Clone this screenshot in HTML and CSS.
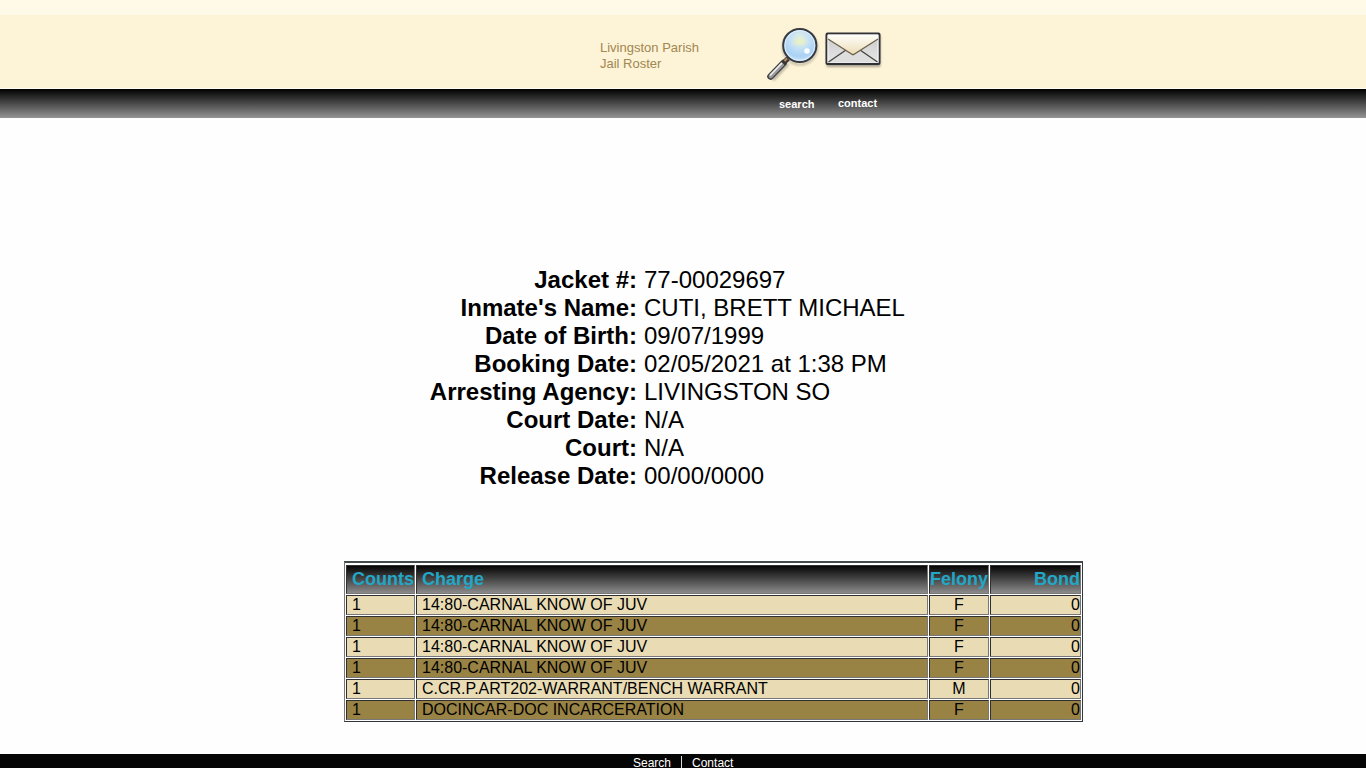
FILE: index.html
```html
<!DOCTYPE html>
<html lang="en">
<head>
<meta charset="utf-8">
<title>Livingston Parish Jail Roster</title>
<link rel="stylesheet" href="styles.css">
</head>
<body>
<header class="banner">
  <div class="title">Livingston Parish<br>Jail Roster</div>
  <svg class="lens" width="56" height="58" viewBox="0 0 56 58">
    <defs>
      <radialGradient id="glass" cx=".5" cy=".3" r=".7"><stop offset="0" stop-color="#e5f1dc"/><stop offset=".35" stop-color="#c9e3f5"/><stop offset=".75" stop-color="#a9d1f5"/><stop offset="1" stop-color="#d5eafa"/></radialGradient>
      <radialGradient id="glow"><stop offset="0" stop-color="#f0f4b4"/><stop offset="1" stop-color="#dcebd8" stop-opacity="0"/></radialGradient>
      <filter id="soft"><feGaussianBlur stdDeviation="1"/></filter>
    </defs>
    <g filter="url(#soft)" opacity=".4" fill="none" stroke="#655f58"><circle cx="35" cy="21.500" r="17" stroke-width="2"/><path d="M7 53L22 37" stroke-width="6"/></g>
    <path d="M5.500 50.500L18.500 37" stroke="#3b3b40" stroke-width="6.500" stroke-linecap="round"/>
    <path d="M5.700 50.200L18 37.500" stroke="#9a9a9b" stroke-width="4.200" stroke-linecap="round"/>
    <path d="M5.500 49L16.500 37.500" stroke="#efefef" stroke-width="1.700" stroke-linecap="round"/>
    <path d="M18 37.500L23 32.500" stroke="#3a3535" stroke-width="5"/>
    <path d="M19.500 35L22 32.500" stroke="#b98c62" stroke-width="2.200"/>
    <circle cx="34.800" cy="19.500" r="16.600" fill="url(#glass)" stroke="#363a43" stroke-width="2"/>
    <circle cx="34.800" cy="19.500" r="15" fill="none" stroke="#e8f5fc" stroke-width="1" opacity=".8"/>
    <ellipse cx="35" cy="16" rx="10" ry="6" fill="url(#glow)"/>
    <circle cx="42" cy="25" r="2.800" fill="#fbfdff"/>
  </svg>
  <svg class="mail" width="60" height="42" viewBox="0 0 60 42">
    <defs>
      <linearGradient id="paper" x2="0" y2="1"><stop stop-color="#c9c9c9"/><stop offset="1" stop-color="#e8e8e8"/></linearGradient>
      <linearGradient id="flap" x2="0" y2="1"><stop stop-color="#fffefa"/><stop offset="1" stop-color="#eadcb4"/></linearGradient>
    </defs>
    <rect x="2.500" y="5" width="54" height="32" rx="1" fill="#5b574e" opacity=".5" filter="url(#soft)"/>
    <rect x="2.500" y="3.500" width="53" height="30.500" rx="1" fill="url(#paper)" stroke="#303137" stroke-width="2"/>
    <path d="M4 5V32.500H54V5" fill="none" stroke="#f7f7f7"/>
    <path d="M4.500 32.500L21 20L29 25L37 20L53.500 32.500Z" fill="#dedede"/>
    <path d="M4.500 32L22 20M53.500 32L36 20" stroke="#45433f" stroke-width="1.300"/>
    <path d="M4 9L29 25L54 9V4.500H4Z" fill="url(#flap)"/>
    <path d="M4 9L27.500 24Q29 25.300 30.500 24L54 9" fill="none" stroke="#6b604a" stroke-width="1.300"/>
  </svg>
</header>
<nav class="bar"><a class="search">search</a><a class="contact">contact</a></nav>
<main>
  <dl class="details">
    <dt>Jacket #:</dt><dd>77-00029697</dd>
    <dt>Inmate's Name:</dt><dd>CUTI, BRETT MICHAEL</dd>
    <dt>Date of Birth:</dt><dd>09/07/1999</dd>
    <dt>Booking Date:</dt><dd>02/05/2021 at 1:38 PM</dd>
    <dt>Arresting Agency:</dt><dd>LIVINGSTON SO</dd>
    <dt>Court Date:</dt><dd>N/A</dd>
    <dt>Court:</dt><dd>N/A</dd>
    <dt>Release Date:</dt><dd>00/00/0000</dd>
  </dl>
  <div class="charges">
    <div class="row head"><span>Counts</span><span>Charge</span><span>Felony</span><span>Bond</span></div>
    <div class="row"><span>1</span><span>14:80-CARNAL KNOW OF JUV</span><span>F</span><span>0</span></div>
    <div class="row alt"><span>1</span><span>14:80-CARNAL KNOW OF JUV</span><span>F</span><span>0</span></div>
    <div class="row"><span>1</span><span>14:80-CARNAL KNOW OF JUV</span><span>F</span><span>0</span></div>
    <div class="row alt"><span>1</span><span>14:80-CARNAL KNOW OF JUV</span><span>F</span><span>0</span></div>
    <div class="row"><span>1</span><span>C.CR.P.ART202-WARRANT/BENCH WARRANT</span><span>M</span><span>0</span></div>
    <div class="row alt"><span>1</span><span>DOCINCAR-DOC INCARCERATION</span><span>F</span><span>0</span></div>
  </div>
</main>
<footer class="foot"><a>Search</a><i class="sep"></i><a>Contact</a></footer>
</body>
</html>
```
FILE: styles.css
```css
* { box-sizing: border-box; }
body {
  margin: 0;
  height: 768px;
  overflow: hidden;
  display: flex;
  flex-direction: column;
  background: #fefefe;
  color: #000;
  font-family: "Liberation Sans", Arial, sans-serif;
}
.banner {
  height: 89px;
  flex: none;
  display: flex;
  align-items: flex-start;
  padding-left: 600px;
  border-top: 15px solid #fff9e7;
  border-bottom: 1px solid #fffdf3;
  background: #fdf3d6;
}
.title {
  width: 165px;
  padding-top: 25px;
  font-size: 13px;
  line-height: 16px;
  color: #a18752;
}
.lens { margin-top: 11px; }
.mail { margin: 15px 0 0 3px; }
.bar {
  height: 29px;
  flex: none;
  display: flex;
  padding-left: 779px;
  background: linear-gradient(#000, #949494);
  color: #fff;
  font-size: 11px;
  font-weight: bold;
  line-height: 13px;
}
.search { width: 59px; padding-top: 9px; }
.contact { padding-top: 8px; }
main { height: 636px; flex: none; padding-top: 148px; }
.details {
  margin: 0;
  display: grid;
  grid-template-columns: 637px 1fr;
  column-gap: 7px;
  grid-auto-rows: 28px;
  font-size: 24px;
  line-height: 28px;
}
.details dt { text-align: right; font-weight: bold; }
.details dd { margin: 0; }
.charges {
  width: 739px;
  margin: 71px 0 0 344px;
  padding: 2px 1px 1px;
  display: grid;
  row-gap: 1px;
  border: 1px solid #30373a;
  border-top: 2px solid #444b4c;
  border-left-color: #777;
}
.row {
  display: grid;
  grid-template-columns: 69px 512px 60px 91px;
  column-gap: 1px;
  height: 20px;
  font-size: 16px;
  line-height: 18px;
}
.row span {
  padding-left: 5px;
  border: 1px solid #777;
  border-top-color: #303030;
  border-left-color: #303030;
  background: #e9dcb4;
  white-space: nowrap;
}
.row.alt span { background: #988244; }
.row span:nth-child(3) { padding: 0; text-align: center; }
.row span:nth-child(4) { padding: 0; text-align: right; }
.row.head { height: 29px; font-size: 18px; font-weight: bold; line-height: 26px; color: #22a7c6; }
.row.head span { background: linear-gradient(#050505, #8b8b8b); }
.foot {
  flex: none;
  height: 14px;
  padding: 2px 0 0 633px;
  display: flex;
  background: #050505;
  color: #fff;
  font-size: 12px;
  line-height: 14px;
}
.sep { width: 1px; height: 12px; margin: 0 10px; background: #ddd; }
```
